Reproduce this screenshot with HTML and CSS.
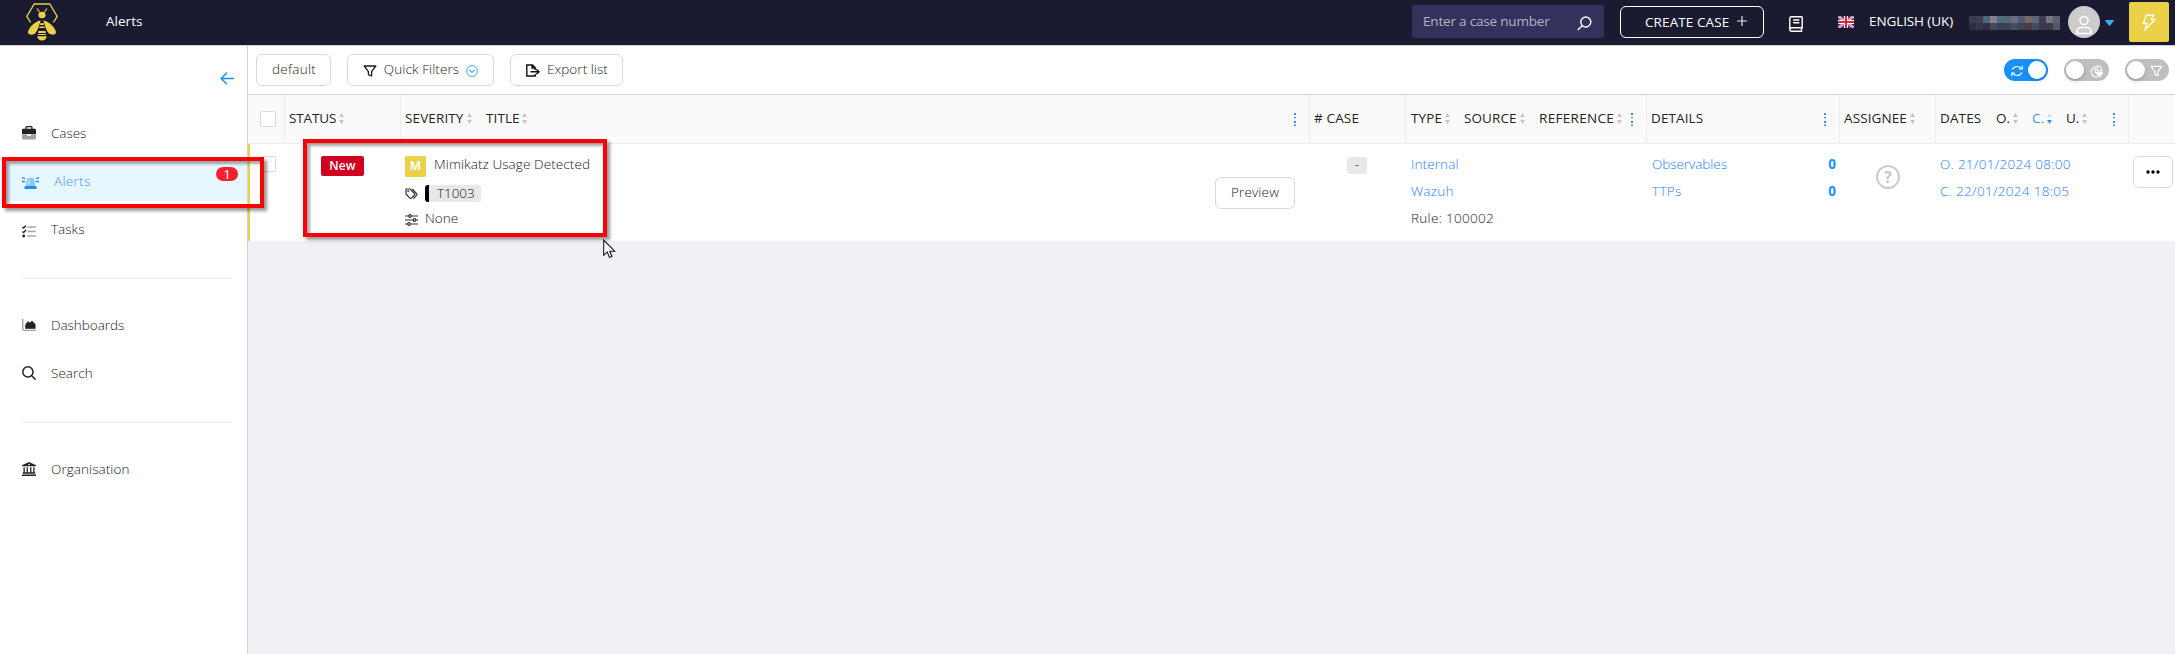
FILE: index.html
```
<!DOCTYPE html>
<html lang="en">
<head>
<meta charset="utf-8">
<title>Alerts</title>
<link rel="stylesheet" href="styles.css">
</head>
<body>
<svg width="0" height="0" class="defs">
  <symbol id="sort" viewBox="0 0 5 11"><path d="M2.5 0 4.8 4H.2z"/><path d="M2.5 11 .2 7h4.6z"/></symbol>
  <symbol id="kebab" viewBox="0 0 2 13"><path d="M0 0h2v2H0zM0 4h2v1H0zM0 8h2v2H0zM0 11.5h2V13H0z"/></symbol>
  <symbol id="funnel" viewBox="0 0 14 12"><path d="M1.2 1h11.6L8.6 6.6V11l-3.2-1.4v-3z" fill="none" stroke="currentColor" stroke-width="1.3" stroke-linejoin="round"/></symbol>
</svg>
<header class="topbar">
  <svg class="logo" viewBox="0 0 32 38" width="32" height="38">
    <path d="M4.6 19.5.8 13.4 8.2 1h15.6l7.4 12.4-3.8 6.1" fill="none" stroke="#ead148" stroke-width="1.3"/>
    <path d="M11 5.5 13.5 9M21 5.5 18.500 9" stroke="#ead148" stroke-width="1.2"/>
    <g fill="#ead148"><ellipse cx="16" cy="12" rx="3.6" ry="3.2"/><path d="M14.700 17.500C9 18.500 3 24 2 29c-.3 3 4.500 3.500 7 1.500 3-3 4-8 5.700-13zM17.300 17.500C23 18.500 29 24 30 29c.3 3-4.500 3.500-7 1.500-3-3-4-8-5.700-13z"/><path d="M14.500 20h3l.5 2h-4zM13.500 23.500h5l.4 1.500h-5.800zM12.500 28h7l.5 2h-8zM11.200 33.200h9.600c-.3 2.800-2.500 4.300-4.800 4.300s-4.500-1.500-4.800-4.300z"/><path d="M12 31h8v1h-8z"/></g>
  </svg>
  <h1 class="crumb">Alerts</h1>
  <div class="case-search"><span class="t-search">Enter a case number</span>
    <svg width="15" height="15" viewBox="0 0 15 15" fill="none" stroke="#fff" stroke-width="1.4"><circle cx="8.800" cy="6" r="5"/><path d="M5.200 9.700.8 14"/></svg></div>
  <div class="create"><span class="t-create">CREATE CASE</span>
    <svg width="10" height="10" viewBox="0 0 10 10" stroke="#e8e8ee" stroke-width="1.200"><path d="M5 0v10M0 5h10"/></svg></div>
  <svg class="book" width="14" height="16" viewBox="0 0 14 16" fill="none" stroke="#fff" stroke-width="1.400"><path d="M13.200.8H2.500Q.8.8.8 2.800v10.500q0 2 2 2h10.500M13.200.8v11H2.600q-1.800 0-1.800 1.700M12.500 12v3.200M4.200 4h6.200M4.200 6.700h6.200"/></svg>
  <svg class="flag" width="16" height="12" viewBox="0 0 16 12"><rect width="16" height="12" fill="#26417e"/><path d="M0 0l16 12M16 0 0 12" stroke="#fff" stroke-width="2.400"/><path d="M0 0l16 12M16 0 0 12" stroke="#e0304a" stroke-width="1"/><path d="M8 0v12M0 6h16" stroke="#fff" stroke-width="4"/><path d="M8 0v12M0 6h16" stroke="#e0203a" stroke-width="2.200"/></svg>
  <span class="lang">ENGLISH (UK)</span>
  <svg class="mosaic" width="91" height="14" viewBox="0 0 13 2" preserveAspectRatio="none" shape-rendering="crispEdges">
    <g><path fill="#3b3a52" d="M0 0h1v1H0z"/><path fill="#3e3f57" d="M1 0h1v1H1z"/><path fill="#52667a" d="M2 0h1v1H2z"/><path fill="#85808a" d="M3 0h1v1H3z"/><path fill="#566a7e" d="M4 0h1v1H4z"/><path fill="#566878" d="M5 0h1v1H5z"/><path fill="#6b6b7d" d="M6 0h1v1H6z"/><path fill="#4f5b73" d="M7 0h1v1H7z"/><path fill="#766a68" d="M8 0h1v1H8z"/><path fill="#5c6579" d="M9 0h1v1H9z"/><path fill="#3f3a57" d="M10 0h1v1h-1z"/><path fill="#77747f" d="M11 0h1v1h-1z"/><path fill="#5e5e70" d="M12 0h1v1h-1z"/></g>
    <g><path fill="#2c2c45" d="M0 1h1v1H0z"/><path fill="#343650" d="M1 1h1v1H1z"/><path fill="#2e3049" d="M2 1h1v1H2z"/><path fill="#444a5c" d="M3 1h1v1H3z"/><path fill="#37405a" d="M4 1h1v1H4z"/><path fill="#3b4255" d="M5 1h1v1H5z"/><path fill="#474e60" d="M6 1h1v1H6z"/><path fill="#3a4358" d="M7 1h1v1H7z"/><path fill="#473a42" d="M8 1h1v1H8z"/><path fill="#454b5f" d="M9 1h1v1H9z"/><path fill="#3c3854" d="M10 1h1v1h-1z"/><path fill="#3c3a50" d="M11 1h1v1h-1z"/><path fill="#54566a" d="M12 1h1v1h-1z"/></g>
  </svg>
  <svg class="avatar" width="32" height="32" viewBox="0 0 32 32"><circle cx="16" cy="16" r="16" fill="#ccc"/><g fill="none" stroke="#fff" stroke-width="1.600"><circle cx="16" cy="14.500" r="4"/><path d="M9 27.500v-1.500q0-4.500 4.500-4.500h5q4.500 0 4.500 4.500v1.500z" stroke-linejoin="round"/></g></svg>
  <svg class="caret" width="9" height="6" viewBox="0 0 9 6"><path d="M.5 0h8q.5.3.2 1L5.300 5.200q-.8.700-1.600 0L.3 1Q0 .3.500 0z" fill="#40a9ff"/></svg>
  <div class="bolt"><svg width="14" height="17" viewBox="0 0 14 17" fill="none" stroke="#fff" stroke-width="1.300" stroke-linejoin="round"><path d="M4.500 1h7.300L9 5.500h4L3 16l2.200-6.500H1.200z"/></svg></div>
</header>
<div class="shell">
  <nav class="side">
    <svg class="back" width="15" height="13" viewBox="0 0 15 13" fill="none" stroke="#1890ff" stroke-width="1.500"><path d="M7 .8 1.200 6.500 7 12.200M1 6.500h13"/></svg>
    <a class="item"><svg width="14" height="14" viewBox="0 0 14 14"><path d="M4 3V1.500Q4 .7 5 .7h4q1 0 1 .8V3" fill="none" stroke="#222" stroke-width="1.300"/><path d="M0 4q0-1.300 1.200-1.300h11.600Q14 2.700 14 4v4H0z" fill="#222"/><path d="M0 8.300h5v1.400h4V8.300h5v4q0 1.200-1.200 1.200H1.200Q0 13.500 0 12.300z" fill="#a0a0a0"/></svg><span class="t-cases">Cases</span></a>
    <a class="item active"><svg width="17" height="14" viewBox="0 0 17 14"><path d="M4 10 4.800 4Q5 2 7 2h3.200q2 0 2.200 2l.8 6z" fill="#8cc8ff"/><path d="M7.500 4 6.500 8.500" stroke="#fff" stroke-width=".8"/><path d="M3.500 10h10q1 0 1 1v2h-12v-2q0-1 1-1z" fill="#1890ff"/><path d="M0 1.500 3 2.700M0 5.500h3M17 1.500 14 2.700M17 5.500h-3" stroke="#1890ff" stroke-width="1.300"/></svg><span class="t-alerts">Alerts</span><b class="badge">1</b></a>
    <a class="item"><svg class="low" width="14" height="13" viewBox="0 0 14 13"><path d="M5.500 2h8.300M5.500 6.500h8.300M5 11h8.800" stroke="#a6a6a6" stroke-width="1.500"/><path d="M.4 2 1.600 3 4 .5M.4 6.500l1.200 1L4 5" fill="none" stroke="#222" stroke-width="1.300"/><circle cx="1.700" cy="11" r="1.400" fill="#222"/></svg><span class="t-tasks">Tasks</span></a>
    <hr>
    <a class="item"><svg width="14" height="13" viewBox="0 0 14 13"><path d="M.7 0v9.800q0 1.600 1.600 1.600H14" fill="none" stroke="#a0a0a0" stroke-width="1.400"/><path d="M3.500 9.500V6l2.300-3.500L8 4l2-2 3.200 3.500v4z" fill="#222" stroke="#222" stroke-width=".6" stroke-linejoin="round"/></svg><span class="t-dash">Dashboards</span></a>
    <a class="item"><svg width="14" height="14" viewBox="0 0 14 14" fill="none" stroke="#222" stroke-width="1.500"><circle cx="5.900" cy="5.900" r="5.100"/><path d="m9.700 9.700 3.900 3.900"/></svg><span class="t-find">Search</span></a>
    <hr>
    <a class="item"><svg width="14" height="14" viewBox="0 0 14 14"><path d="M0 4.300V3.200L7 0l7 3.200v1.100zM1.500 5.300h1.300v5.200H1.500zM4.600 5.300h1.300v5.200H4.600zM8.100 5.300h1.300v5.200H8.100zM11.200 5.300h1.300v5.200h-1.300zM.8 10.300h12.400v1.500H.8zM0 12.500h14V14H0z" fill="#222"/><circle cx="7" cy="2.500" r=".8" fill="#fff"/></svg><span class="t-org">Organisation</span></a>
  </nav>
  <main class="main">
    <div class="toolbar">
      <button class="btn b-default"><span class="t-default">default</span></button>
      <button class="btn b-quick"><svg width="14" height="12"><use href="#funnel"/></svg><span class="t-quick">Quick Filters</span><svg class="ring" width="12" height="12" viewBox="0 0 12 12" fill="none" stroke="#40a9ff"><circle cx="6" cy="6" r="5.400"/><path d="m3.300 4.900 2.700 2.500 2.700-2.500" stroke-width="1.200"/></svg></button>
      <button class="btn b-export"><svg width="14" height="13" viewBox="0 0 14 13" fill="none" stroke="#111" stroke-width="1.400"><path d="M9.200 10v2H.8V1h5.700l2.700 2.700V6M6 1v3h3M4.500 7.800h8M10.300 5.300l2.800 2.500-2.800 2.500"/></svg><span class="t-export">Export list</span></button>
      <div class="switches">
        <div class="switch on"><svg width="12" height="12" viewBox="0 0 12 12" fill="none" stroke="#fff" stroke-width="1.200"><path d="M1.200 4.600Q2.500 1.500 6 1.500q2.500 0 4 2M10.800 7.400Q9.500 10.500 6 10.500q-2.500 0-4-2M11.200.8v3H8.300M.8 11.200v-3h2.900"/></svg><i></i></div>
        <div class="switch chart"><i></i><svg width="13" height="13" viewBox="0 0 13 13" fill="none" stroke="#fff" stroke-width="1.200"><path d="M5 1.800A5.200 5.200 0 1 0 9.500 11L5 7z"/><path d="M7.200.8Q11.500 1 12 5.800H7.200z"/><path d="M7.500 7.600h4.700q-.2 2-1.500 3.200z" fill="#fff"/></svg></div>
        <div class="switch"><i></i><svg width="13" height="12"><use href="#funnel"/></svg></div>
      </div>
    </div>
    <div class="grid head">
      <div class="cell"><span class="check"></span></div>
      <div class="cell"><span class="t-status">STATUS</span><svg class="sort"><use href="#sort"/></svg></div>
      <div class="cell"><span class="t-sev">SEVERITY</span><svg class="sort"><use href="#sort"/></svg><span class="t-title">TITLE</span><svg class="sort"><use href="#sort"/></svg><svg class="kebab"><use href="#kebab"/></svg></div>
      <div class="cell"><span class="t-case"># CASE</span></div>
      <div class="cell"><span class="t-type">TYPE</span><svg class="sort"><use href="#sort"/></svg><span class="t-source">SOURCE</span><svg class="sort"><use href="#sort"/></svg><span class="t-ref">REFERENCE</span><svg class="sort s-last"><use href="#sort"/></svg><svg class="kebab"><use href="#kebab"/></svg></div>
      <div class="cell"><span class="t-details">DETAILS</span><svg class="kebab"><use href="#kebab"/></svg></div>
      <div class="cell"><span class="t-assignee">ASSIGNEE</span><svg class="sort"><use href="#sort"/></svg></div>
      <div class="cell"><span class="t-dates">DATES</span><span class="t-o">O.</span><svg class="sort"><use href="#sort"/></svg><span class="t-c">C.</span><svg class="sort" viewBox="0 0 5 11"><path d="M2.500 0 4.800 4H.2z" fill="#bfe0fb"/><path d="M2.500 11 .2 7h4.600z" fill="#1890ff"/></svg><span class="t-u">U.</span><svg class="sort"><use href="#sort"/></svg><svg class="kebab"><use href="#kebab"/></svg></div>
      <div class="cell"></div>
    </div>
    <div class="grid row">
      <div class="c-check"><span class="check"></span></div>
      <div class="c-status"><span class="new">New</span></div>
      <div class="c-title">
        <div class="lines">
          <div class="line l1"><b class="sev">M</b><span class="t-mimi">Mimikatz Usage Detected</span></div>
          <div class="line l2"><svg width="13" height="12" viewBox="0 0 13 12" fill="none" stroke="#333" stroke-width="1.200" stroke-linejoin="round"><path d="M1 1h4l4.500 4.500q.7.700 0 1.500L6.300 10.200q-.7.700-1.400 0L1 6zM7.300 1l4.400 4.600q.6.700 0 1.500L8.300 10.800"/><circle cx="3.300" cy="3.300" r=".4"/></svg><span class="tag"><span class="t-tag">T1003</span></span></div>
          <div class="line l3"><svg width="13" height="12" viewBox="0 0 13 12" fill="#fff" stroke="#333" stroke-width="1.200"><path d="M0 2h13M0 6h13M0 10h13"/><circle cx="5" cy="2" r="1.300"/><circle cx="9.500" cy="6" r="1.300"/><circle cx="4" cy="10" r="1.300"/></svg><span class="t-none">None</span></div>
        </div>
        <button class="btn preview"><span class="t-preview">Preview</span></button>
      </div>
      <div class="c-case"><span class="dash">-</span></div>
      <div class="stack"><span class="t-internal link">Internal</span><span class="t-wazuh link">Wazuh</span><span class="t-rule">Rule: 100002</span></div>
      <div class="stack"><p><span class="t-obs link">Observables</span><b>0</b></p><p><span class="t-ttp link">TTPs</span><b>0</b></p></div>
      <div class="c-assignee"><span class="who">?</span></div>
      <div class="stack dates"><span class="t-d1 link">O. 21/01/2024 08:00</span><span class="t-d2 link">C. 22/01/2024 18:05</span></div>
      <div class="c-more"><button class="btn more"><svg width="14" height="4" viewBox="0 0 14 4"><circle cx="2" cy="2" r="1.700"/><circle cx="7" cy="2" r="1.700"/><circle cx="12" cy="2" r="1.700"/></svg></button></div>
    </div>
  </main>
</div>
<div class="mark mark-nav"></div>
<div class="mark mark-alert"></div>
<svg class="cursor" width="13" height="20" viewBox="0 0 13 20"><path d="M.7 1v15.300l3.500-3.400L6.500 18.500l2.500-1-2.300-5.300h5z" fill="#fff" stroke="#16182c" stroke-width="1.100"/></svg>
</body>
</html>
```

FILE: styles.css
```
*{box-sizing:border-box}
body{margin:0;background:#f0f1f6;font:300 13.5px/20px "Open Sans",sans-serif;color:#222;overflow:hidden}
span{white-space:nowrap}
svg{flex:none;display:block}
.defs{position:absolute}
.topbar{height:46px;background:#1a1b31;border-bottom:1px solid #d4d4d8;display:flex;align-items:flex-start;padding-left:26px;color:#fff;font-weight:400}
.logo{margin-top:3px}
.crumb{font:inherit;margin:11px 0 0 48px;width:36px;letter-spacing:.03px}
.case-search{margin:5px 0 0 1270px;width:192px;height:33px;background:#32325d;border-radius:2px;padding:0 12px 0 11px;display:flex;align-items:center;justify-content:space-between;color:#b4b4c2}
.case-search svg{margin-top:3px}
.t-search{letter-spacing:-.19px;margin-top:-1px}
.create{margin:6px 0 0 16px;width:144px;height:32px;border:1px solid #fff;border-radius:6px;display:flex;align-items:center;padding:0 0 1px 24px}
.create svg{margin-left:8px;margin-top:-1px}
.t-create{width:84px;letter-spacing:.1px}
.book{margin:16px 0 0 25px}
.flag{margin:16px 0 0 35px}
.lang{margin:11px 0 0 15px;width:85px;letter-spacing:-.1px}
.mosaic{margin:16px 0 0 15px}
.avatar{margin:6px 0 0 8px}
.caret{margin:20px 0 0 5px}
.bolt{margin:2px 0 0 15px;width:40px;height:40px;border-radius:2px;background:#ead148;display:flex;align-items:center;justify-content:center}
.shell{display:flex;height:608px}
.side{width:248px;background:#fff;border-right:1px solid #d4d4d8;padding-top:63px;position:relative;display:flex;flex-direction:column}
.back{position:absolute;left:220px;top:26px}
.item{flex:none;height:40px;margin:4px 0;padding-left:22px;display:flex;align-items:center}
.item>span{margin-left:15px}
.low{margin-top:4px}
.active{background:#e6f7ff;color:#3d94fa;position:relative}
.active svg{margin-top:3px}
.badge{position:absolute;left:216px;top:6px;width:22px;height:14px;border-radius:7px;background:#f5222d;color:#fff;font-weight:400;line-height:14px;text-align:center}
.side hr{flex:none;height:1px;border:0;background:#ececec;margin:25px 15px 22px 22px}
.t-alerts{letter-spacing:.31px}
.t-cases,.t-dash{letter-spacing:-.04px}
.t-tasks{letter-spacing:.03px}
.t-find{letter-spacing:.03px}
.t-org{letter-spacing:.07px}
.main{flex:1;min-width:0}
.toolbar{height:49px;background:#fff;border-bottom:1px solid #d4d4d8;padding:8px 6px 0 8px;display:flex}
.btn{height:32px;border:1px solid #d9d9d9;border-radius:6px;background:#fff;color:#1c1c1c;font:inherit;display:flex;align-items:center;padding:0 0 2px 15px}
.b-default{width:75px}
.b-quick{width:147px;margin-left:16px}
.b-export{width:113px;margin-left:16px}
.b-quick>svg,.b-export>svg{margin-top:3px}
.t-default{letter-spacing:.26px}
.t-quick{letter-spacing:.1px;margin-left:6px;width:77px}
.ring{margin-left:6px}
.t-export{letter-spacing:.05px;margin-left:7px}
.switches{margin:5px 0 0 auto;display:flex;gap:16px}
.switch{width:44px;height:22px;border-radius:11px;background:#bfbfbf;display:flex;align-items:center;justify-content:space-between;padding:0 6px 0 2px;color:#fff}
.switch.chart{width:45px}
.switch i{width:18px;height:18px;border-radius:50%;background:#fff;box-shadow:0 2px 4px rgba(0,35,11,.2)}
.switch svg{margin-top:2px}
.switch.on{background:#1890ff;padding:0 2px 0 7px}
.grid{display:grid;grid-template-columns:37px 116px 909px 96px 241px 193px 96px 193px 46px}
.head{height:49px;background:#fafafa;border-bottom:1px solid #ededed;font-weight:400;color:#242424}
.cell{border-right:1px solid #ececec;display:flex;align-items:center;padding-left:4px}
.cell>span:not(.check){margin-top:-2px}
.cell:first-child{padding-left:12px}
.cell:last-child{border:0}
.check{width:16px;height:16px;border:1px solid #d9d9d9;border-radius:2px;background:#fff;display:block}
.sort{width:5px;height:11px;fill:#c3c3c3;margin-right:14px;margin-top:-1px}
.s-last{margin-right:0}
.kebab{width:2px;height:13px;fill:#3d8bfd;margin-left:auto;margin-right:13px}
.t-status{width:50px;letter-spacing:-.12px}
.t-sev{width:62px;letter-spacing:.12px}
.t-title{width:36px;letter-spacing:.1px}
.t-case{letter-spacing:.15px}
.t-type{width:34px;margin-left:1px;letter-spacing:.1px}
.t-source{width:56px;letter-spacing:.1px}
.t-ref{width:78px;letter-spacing:.3px}
.t-details{letter-spacing:.1px}
.t-assignee{width:66px;letter-spacing:.1px}
.t-dates{width:56px;letter-spacing:.12px}
.t-o{width:17px}
.t-c{width:15px;letter-spacing:.3px;color:#3d94fa}
.t-u{width:16px}
.row{height:97px;background:#fff;border-left:2px solid #ead148;grid-template-columns:35px 116px 909px 96px 241px 193px 96px 193px 46px}
.c-check{padding:12px 0 0 10px}
.c-status{padding:12px 0 0 36px}
.new{display:block;width:43px;height:20px;border-radius:2px;background:#cf0020;color:#fff;font:600 12px/20px "Open Sans",sans-serif;text-align:center;letter-spacing:.2px}
.c-title{display:flex;padding-left:4px}
.lines{flex:1}
.line{display:flex}
.l1{margin-top:12px;height:21px}
.sev{width:21px;height:21px;border-radius:2px;background:#ead148;color:#fff;font:700 12px/20px "Open Sans",sans-serif;text-align:center}
.t-mimi{margin:-2px 0 0 8px;letter-spacing:.09px}
.l2{margin-top:8px;height:17px}
.l2 svg{margin-top:3px}
.tag{margin-left:7px;width:56px;height:17px;border-left:4px solid #000;border-radius:3px;background:#e8e8e8;padding-left:8px;line-height:16px}
.t-tag{letter-spacing:-.08px}
.l3{margin-top:8px}
.l3 svg{margin-top:4px}
.t-none{margin:-2px 0 0 7px;letter-spacing:.05px}
.preview{margin:33px 15px 0 0;width:80px}
.t-preview{letter-spacing:.15px}
.c-case{padding:13px 0 0 37px}
.dash{display:block;width:20px;height:17px;background:#e8e8e8;border-radius:3px;text-align:center;line-height:15px}
.stack{padding:10px 0 0 5px;display:flex;flex-direction:column;gap:7px}
.dates{padding-left:4px}
.link{color:#247ffb}
.stack b{font-weight:700;color:#1890ff}
.stack p{display:flex;justify-content:space-between;margin:0;padding-right:4px}
.t-internal{letter-spacing:.1px}
.t-wazuh{letter-spacing:.25px}
.t-rule{letter-spacing:.3px}
.t-obs{letter-spacing:-.05px}
.t-ttp{letter-spacing:.3px}
.t-d1{letter-spacing:.28px}
.t-d2{letter-spacing:.3px}
.c-assignee{padding:21px 0 0 36px}
.who{display:block;width:24px;height:24px;border:2px solid #ccc;border-radius:50%;color:#c6c6c6;font-weight:700;font-size:16px;line-height:20px;text-align:center}
.c-more{padding:12px 0 0 4px}
.more{width:40px;padding:0 0 1px 12px}
.mark{position:absolute;border:4px solid #fe0000;box-shadow:3px 3px 3px rgba(0,0,0,.4),inset 3px 3px 3px rgba(0,0,0,.35)}
.mark-nav{left:2px;top:157px;width:262px;height:51px}
.mark-alert{left:303px;top:139px;width:304px;height:98px}
.cursor{position:absolute;left:603px;top:239px}
```
